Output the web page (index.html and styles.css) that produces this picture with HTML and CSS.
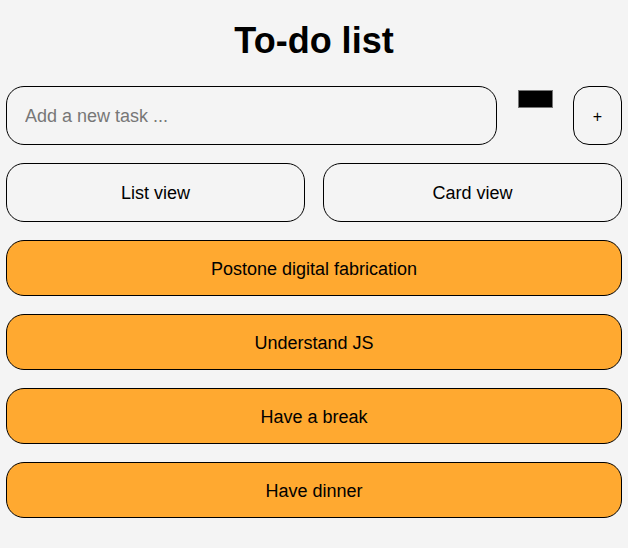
FILE: index.html
```html
<!DOCTYPE html>
<html>
<head>
<meta charset="utf-8">
<link rel="stylesheet" href="styles.css">
</head>
<body>
<div class="app">
  <h1 class="title">To-do list</h1>
  <div class="add-row">
    <input class="task-input" type="text" placeholder="Add a new task ...">
    <span class="swatch"></span>
    <button class="add-btn">+</button>
  </div>
  <div class="views">
    <button class="view-btn">List view</button>
    <button class="view-btn">Card view</button>
  </div>
  <div class="task">Postone digital fabrication</div>
  <div class="task">Understand JS</div>
  <div class="task">Have a break</div>
  <div class="task">Have dinner</div>
</div>
</body>
</html>
```
FILE: styles.css
```css
html, body {
  margin: 0;
  padding: 0;
  background: #f4f4f4;
  font-family: "Liberation Sans", Arial, sans-serif;
  color: #000;
}
.app {
  display: flex;
  flex-direction: column;
  gap: 18px;
  padding: 0 6px;
}
.title {
  margin: 20px 0 6px;
  font-size: 36px;
  line-height: 42px;
  font-weight: bold;
  text-align: center;
}
.add-row {
  display: flex;
  align-items: flex-start;
}
.task-input {
  flex: 1;
  height: 59px;
  box-sizing: border-box;
  border: 1px solid #000;
  border-radius: 18px;
  background: transparent;
  padding: 2px 18px 0;
  font-family: inherit;
  font-size: 18px;
  color: #000;
  outline: none;
}
.task-input::placeholder {
  color: #777;
}
.swatch {
  width: 35px;
  height: 18px;
  box-sizing: border-box;
  margin: 4px 20px 0 21px;
  background: #000;
  border: 1px solid #767676;
}
.add-btn {
  width: 49px;
  height: 59px;
  box-sizing: border-box;
  border: 1px solid #000;
  border-radius: 16px;
  background: transparent;
  font-family: inherit;
  font-size: 16px;
  color: #000;
  padding: 2px 0 0;
}
.views {
  display: grid;
  grid-template-columns: 1fr 1fr;
  gap: 18px;
}
.view-btn {
  height: 59px;
  border: 1px solid #000;
  border-radius: 18px;
  background: transparent;
  font-family: inherit;
  font-size: 18px;
  color: #000;
  padding: 2px 0 0;
}
.task {
  height: 56px;
  box-sizing: border-box;
  border: 1px solid #000;
  border-radius: 18px;
  background: #ffa930;
  display: flex;
  align-items: center;
  justify-content: center;
  padding-top: 2px;
  font-size: 18px;
}
```
